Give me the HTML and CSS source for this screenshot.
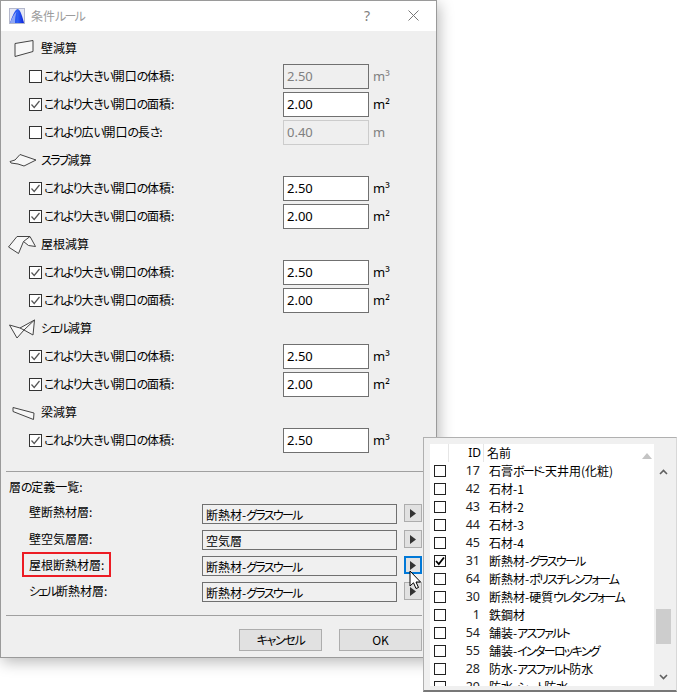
FILE: index.html
```html
<!DOCTYPE html>
<html lang="ja">
<head>
<meta charset="utf-8">
<title>条件ルール</title>
<link rel="stylesheet" href="styles.css">
</head>
<body>
<div class="dialog">
  <header class="titlebar">
    <svg class="app-icon" width="16" height="16" viewBox="0 0 16 16"><defs><linearGradient id="g" x1="0" y1="0" x2="1" y2="0"><stop offset="0" stop-color="#0c2fe8"/><stop offset="0.55" stop-color="#2f62f5"/><stop offset="1" stop-color="#0a20d8"/></linearGradient></defs><rect x="0.5" y="0.5" width="15" height="15" fill="#e4e7f4" stroke="#b4b8cc"/><path d="M1 15C3 9 6 1 9 1C11.500 2 13.500 9 15 15Z" fill="url(#g)"/><path d="M1 15C3 10 5 6 7.500 3.500C6.500 7 6 11 6 15Z" fill="#8ea6f5"/></svg>
    <span class="title">条件<span class="kk">ルール</span></span>
    <span class="help">?</span>
    <svg class="close" width="11" height="11" viewBox="0 0 11 11"><path d="M0.500 0.500L10.500 10.500M10.500 0.500L0.500 10.500" stroke="#777" fill="none"/></svg>
  </header>
  <main class="content">
    <section class="rules">
      <div class="heading">
        <svg class="type-icon" width="34" height="28" viewBox="6 34 34 28"><path d="M15 43.500L33 40.500V51.500L15 56.500Z" fill="#f7f7f7" stroke="#444"/></svg>
        <span>壁減算</span>
      </div>
      <div class="row">
        <span class="check"></span><span class="label"><span class="k">これより</span>大<span class="k">きい</span>開口<span class="k">の</span>体積:</span>
        <span class="input dim">2.50</span><span class="unit dim-text">m³</span>
      </div>
      <div class="row">
        <span class="check"><svg width="11" height="11" viewBox="0 0 11 11"><path d="M1.500 5.500L4.200 8.500L9.500 2" fill="none" stroke="#555" stroke-width="1.200"/></svg></span><span class="label"><span class="k">これより</span>大<span class="k">きい</span>開口<span class="k">の</span>面積:</span>
        <span class="input">2.00</span><span class="unit">m²</span>
      </div>
      <div class="row">
        <span class="check"></span><span class="label"><span class="k">これより</span>広<span class="k">い</span>開口<span class="k">の</span>長<span class="k">さ</span>:</span>
        <span class="input dim faint">0.40</span><span class="unit dim-text">m</span>
      </div>

      <div class="heading">
        <svg class="type-icon" width="34" height="28" viewBox="6 146 34 28"><path d="M10 161.500L15 160L20 154.500L36 160L24 166L18 164L11 163Z" fill="#f7f7f7" stroke="#444"/></svg>
        <span><span class="kk">スラブ</span>減算</span>
      </div>
      <div class="row">
        <span class="check"><svg width="11" height="11" viewBox="0 0 11 11"><path d="M1.500 5.500L4.200 8.500L9.500 2" fill="none" stroke="#555" stroke-width="1.200"/></svg></span><span class="label"><span class="k">これより</span>大<span class="k">きい</span>開口<span class="k">の</span>体積:</span>
        <span class="input">2.50</span><span class="unit">m³</span>
      </div>
      <div class="row">
        <span class="check"><svg width="11" height="11" viewBox="0 0 11 11"><path d="M1.500 5.500L4.200 8.500L9.500 2" fill="none" stroke="#555" stroke-width="1.200"/></svg></span><span class="label"><span class="k">これより</span>大<span class="k">きい</span>開口<span class="k">の</span>面積:</span>
        <span class="input">2.00</span><span class="unit">m²</span>
      </div>

      <div class="heading">
        <svg class="type-icon" width="34" height="28" viewBox="6 230 34 28"><path d="M8.500 247L17 236.500H30L35.500 246.500L28.500 245.500L23.500 241.500L18.500 253.500Z" fill="#f7f7f7" stroke="#444"/><path d="M30 236.500L23.500 241.500" fill="none" stroke="#444"/></svg>
        <span>屋根減算</span>
      </div>
      <div class="row">
        <span class="check"><svg width="11" height="11" viewBox="0 0 11 11"><path d="M1.500 5.500L4.200 8.500L9.500 2" fill="none" stroke="#555" stroke-width="1.200"/></svg></span><span class="label"><span class="k">これより</span>大<span class="k">きい</span>開口<span class="k">の</span>体積:</span>
        <span class="input">2.50</span><span class="unit">m³</span>
      </div>
      <div class="row">
        <span class="check"><svg width="11" height="11" viewBox="0 0 11 11"><path d="M1.500 5.500L4.200 8.500L9.500 2" fill="none" stroke="#555" stroke-width="1.200"/></svg></span><span class="label"><span class="k">これより</span>大<span class="k">きい</span>開口<span class="k">の</span>面積:</span>
        <span class="input">2.00</span><span class="unit">m²</span>
      </div>

      <div class="heading">
        <svg class="type-icon" width="34" height="28" viewBox="6 314 34 28"><path d="M9.500 325L20 328L34.500 320L33 335L24 330L17 338Z" fill="#f7f7f7" stroke="#444"/><path d="M20 328L24 330M34.500 320L24 330" fill="none" stroke="#444"/></svg>
        <span><span class="kk">シェル</span>減算</span>
      </div>
      <div class="row">
        <span class="check"><svg width="11" height="11" viewBox="0 0 11 11"><path d="M1.500 5.500L4.200 8.500L9.500 2" fill="none" stroke="#555" stroke-width="1.200"/></svg></span><span class="label"><span class="k">これより</span>大<span class="k">きい</span>開口<span class="k">の</span>体積:</span>
        <span class="input">2.50</span><span class="unit">m³</span>
      </div>
      <div class="row">
        <span class="check"><svg width="11" height="11" viewBox="0 0 11 11"><path d="M1.500 5.500L4.200 8.500L9.500 2" fill="none" stroke="#555" stroke-width="1.200"/></svg></span><span class="label"><span class="k">これより</span>大<span class="k">きい</span>開口<span class="k">の</span>面積:</span>
        <span class="input">2.00</span><span class="unit">m²</span>
      </div>

      <div class="heading">
        <svg class="type-icon" width="34" height="28" viewBox="6 398 34 28"><path d="M13 407.500L34 413L33.500 419.500L13 411.500Z" fill="#f7f7f7" stroke="#444"/></svg>
        <span>梁減算</span>
      </div>
      <div class="row">
        <span class="check"><svg width="11" height="11" viewBox="0 0 11 11"><path d="M1.500 5.500L4.200 8.500L9.500 2" fill="none" stroke="#555" stroke-width="1.200"/></svg></span><span class="label"><span class="k">これより</span>大<span class="k">きい</span>開口<span class="k">の</span>体積:</span>
        <span class="input">2.50</span><span class="unit">m³</span>
      </div>
    </section>

    <section class="layers">
      <div class="layers-title">層<span class="k">の</span>定義一覧:</div>
      <div class="layer"><span class="layer-label">壁断熱材層:</span><span class="field">断熱材-<span class="kk">グラスウール</span></span><button class="arrow"><svg width="6" height="9" viewBox="0 0 6 9"><path d="M0 0L6 4.500L0 9Z" fill="#333"/></svg></button></div>
      <div class="layer"><span class="layer-label">壁空気層層:</span><span class="field">空気層</span><button class="arrow"><svg width="6" height="9" viewBox="0 0 6 9"><path d="M0 0L6 4.500L0 9Z" fill="#333"/></svg></button></div>
      <div class="layer"><span class="layer-label"><span class="callout">屋根断熱材層:</span></span><span class="field">断熱材-<span class="kk">グラスウール</span></span><button class="arrow focus"><svg width="6" height="9" viewBox="0 0 6 9"><path d="M0 0L6 4.500L0 9Z" fill="#333"/></svg></button></div>
      <div class="layer"><span class="layer-label"><span class="kk">シェル</span>断熱材層:</span><span class="field">断熱材-<span class="kk">グラスウール</span></span><button class="arrow"><svg width="6" height="9" viewBox="0 0 6 9"><path d="M0 0L6 4.500L0 9Z" fill="#333"/></svg></button></div>
    </section>

    <footer class="actions">
      <button class="action"><span class="k">キャンセル</span></button>
      <button class="action">OK</button>
    </footer>
  </main>
</div>

<div class="popup">
  <div class="list">
    <div class="list-head">
      <span class="head-check"></span>
      <span class="head-id">ID</span>
      <span class="head-name">名前</span>
      <svg class="sort" width="10" height="6" viewBox="0 0 10 6"><path d="M5 0L10 6H0Z" fill="#c4c4c4"/></svg>
    </div>
    <div class="item"><span class="box"></span><span class="id">17</span><span class="name">石膏<span class="kk">ボード</span>-天井用(化粧)</span></div>
    <div class="item"><span class="box"></span><span class="id">42</span><span class="name">石材-1</span></div>
    <div class="item"><span class="box"></span><span class="id">43</span><span class="name">石材-2</span></div>
    <div class="item"><span class="box"></span><span class="id">44</span><span class="name">石材-3</span></div>
    <div class="item"><span class="box"></span><span class="id">45</span><span class="name">石材-4</span></div>
    <div class="item"><span class="box"><svg width="10" height="10" viewBox="0 0 10 10"><path d="M1 5L3.800 8L9 1.500" fill="none" stroke="#000" stroke-width="1.800"/></svg></span><span class="id">31</span><span class="name">断熱材-<span class="kk">グラスウール</span></span></div>
    <div class="item"><span class="box"></span><span class="id">64</span><span class="name">断熱材-<span class="kk">ポリスチレンフォーム</span></span></div>
    <div class="item"><span class="box"></span><span class="id">30</span><span class="name">断熱材-硬質<span class="kk">ウレタンフォーム</span></span></div>
    <div class="item"><span class="box"></span><span class="id">1</span><span class="name">鉄鋼材</span></div>
    <div class="item"><span class="box"></span><span class="id">54</span><span class="name">舗装-<span class="kk">アスファルト</span></span></div>
    <div class="item"><span class="box"></span><span class="id">55</span><span class="name">舗装-<span class="kk">インターロッキング</span></span></div>
    <div class="item"><span class="box"></span><span class="id">28</span><span class="name">防水-<span class="kk">アスファルト</span>防水</span></div>
    <div class="item"><span class="box"></span><span class="id">29</span><span class="name">防水-<span class="kk">シート</span>防水</span></div>
  </div>
  <div class="scrollbar">
    <svg class="scroll-btn" width="9" height="6" viewBox="0 0 9 6"><path d="M1 5L4.500 1.500L8 5" fill="none" stroke="#606060" stroke-width="1.600"/></svg>
    <div class="track"><div class="thumb"></div></div>
    <svg class="scroll-btn" width="9" height="6" viewBox="0 0 9 6"><path d="M1 1L4.500 4.500L8 1" fill="none" stroke="#606060" stroke-width="1.600"/></svg>
  </div>
</div>

<svg class="cursor" width="13" height="20" viewBox="0 0 13 20"><path d="M1 1V16L4.500 12.800L7 18.500L9.500 17.500L7 12H11.500Z" fill="#fff" stroke="#000"/></svg>
</body>
</html>
```
FILE: styles.css
```css
* { box-sizing: border-box; }
html, body { margin: 0; padding: 0; }
body {
  position: relative;
  width: 679px;
  height: 693px;
  overflow: hidden;
  background: #fff;
  font: 12px/16px "Noto Sans CJK JP", "Noto Sans", sans-serif;
  font-feature-settings: "palt";
  color: #000;
}
.k { letter-spacing: -1.3px; }
.kk { letter-spacing: -1.7px; }
.dialog {
  position: absolute;
  left: 0;
  top: 0;
  width: 437px;
  height: 658px;
  border: 1px solid #9a9a9a;
  background: #efefef;
  box-shadow: 2px 4px 14px rgba(0, 0, 0, .28);
  display: flex;
  flex-direction: column;
}
.titlebar {
  height: 30px;
  background: #fff;
  display: flex;
  align-items: center;
  padding-left: 8px;
  padding-bottom: 1px;
  flex: none;
}
.app-icon { margin-right: 6px; }
.title { color: #9c9c9c; }
.help { margin-left: auto; font: 14px/16px "Noto Sans", sans-serif; color: #808080; margin-right: 38px; }
.close { margin-right: 17px; }
.content { flex: 1; display: flex; flex-direction: column; }
.rules { padding-top: 3px; }
.heading {
  height: 28px;
  display: flex;
  align-items: center;
  padding-left: 5px;
  gap: 1px;
}
.type-icon { flex: none; }
.row {
  height: 28px;
  display: grid;
  grid-template-columns: 15px 239px 86px auto;
  align-items: center;
  padding-left: 28px;
}
.check {
  width: 13px;
  height: 13px;
  border: 1px solid #333;
  background: #fff;
  display: flex;
  align-items: center;
  justify-content: center;
}
.input {
  height: 25px;
  border: 1px solid #707070;
  background: #fff;
  padding-left: 3px;
  font: 13px/23px "Noto Sans", sans-serif;
}
.input.dim { background: #efefef; color: #808080; }
.input.faint { border-color: #ccc; }
.unit { padding-left: 4px; font: 13px/16px "Noto Sans", sans-serif; }
.dim-text { color: #808080; }
.layers {
  margin: 17px 13px 0 5px;
  border-top: 1px solid #a0a0a0;
  padding-top: 7px;
}
.layers-title { height: 16px; padding-left: 3px; margin-bottom: 9px; }
.layer {
  height: 26px;
  display: flex;
  align-items: flex-start;
  padding-left: 23px;
}
.layer-label { width: 173px; flex: none; line-height: 16px; }
.layer + .layer .layer-label { margin-top: 1px; }
.callout { outline: 2px solid #ec1c24; outline-offset: 2px; padding: 0 3px; margin-left: -3px; }
.field {
  width: 195px;
  height: 20px;
  flex: none;
  border: 1px solid #707070;
  padding-left: 3px;
  line-height: 19px;
  background: #f0f0f0;
}
.arrow {
  width: 18px;
  height: 18px;
  flex: none;
  margin-left: 7px;
  padding: 0;
  border: 1px solid #adadad;
  background: #e1e1e1;
  display: flex;
  align-items: center;
  justify-content: center;
}
.arrow.focus { border: 2px solid #0078d7; }
.actions {
  margin: 7px 14px 0 5px;
  border-top: 1px solid #a0a0a0;
  padding-top: 13px;
  display: flex;
  justify-content: flex-end;
  gap: 17px;
}
.action {
  width: 83px;
  height: 22px;
  padding: 0;
  border: 1px solid #adadad;
  background: #e1e1e1;
  font: 12px/18px "Noto Sans CJK JP", "Noto Sans", sans-serif;
  font-feature-settings: "palt";
  color: #000;
}
.popup {
  position: absolute;
  left: 423px;
  top: 437px;
  width: 254px;
  height: 255px;
  background: #f0f0f0;
  border: 1px solid #b0b0b0;
  border-right-color: #d8d8d8;
  border-bottom: 2px solid #777;
  padding: 6px 0 4px 6px;
  display: flex;
}
.list {
  width: 224px;
  background: #fff;
  overflow: hidden;
  flex: none;
}
.list-head {
  height: 18px;
  display: flex;
  align-items: center;
  position: relative;
}
.head-check { width: 19px; height: 18px; border-right: 1px solid #e6e6e6; }
.head-id { width: 35px; height: 18px; text-align: right; padding-right: 2px; border-right: 1px solid #e6e6e6; font: 12px/17px "Noto Sans", sans-serif; }
.head-name { padding-left: 3px; }
.sort { position: absolute; right: 2px; top: 9px; }
.item {
  height: 18px;
  display: flex;
  align-items: center;
  padding-left: 4px;
}
.box {
  width: 12px;
  height: 12px;
  border: 1px solid #222;
  display: flex;
  align-items: center;
  justify-content: center;
  flex: none;
}
.id { width: 34px; text-align: right; font: 12.500px/16px "Noto Sans", sans-serif; flex: none; color: #222; }
.name { margin-left: 9px; white-space: nowrap; }
.scrollbar {
  flex: 1;
  display: flex;
  flex-direction: column;
  align-items: center;
  padding: 25px 5px 6px 2px;
}
.scroll-btn { flex: none; }
.track { flex: 1; width: 100%; padding-top: 134px; }
.thumb { height: 35px; background: #cdcdcd; }
.cursor { position: absolute; left: 409px; top: 570px; }
```
